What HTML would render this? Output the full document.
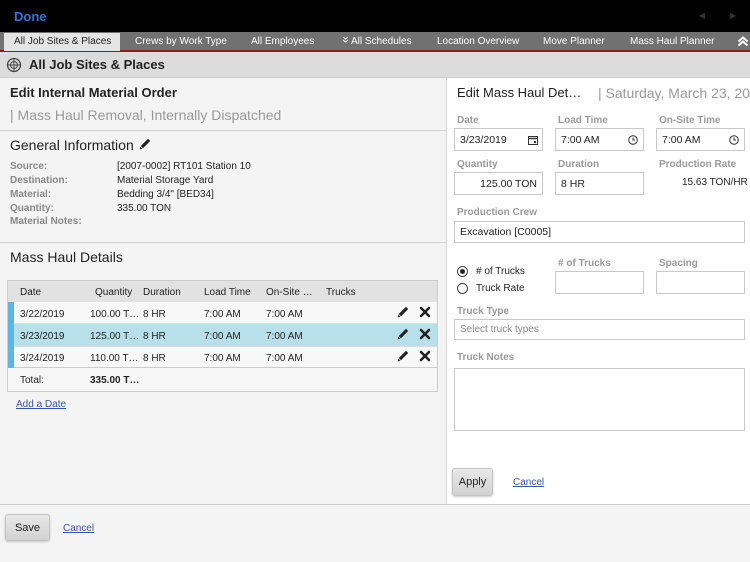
<!DOCTYPE html>
<html><head><meta charset="utf-8"><style>
*{margin:0;padding:0;box-sizing:border-box}
body{width:750px;height:562px;overflow:hidden;background:#f4f4f4;font-family:"Liberation Sans",Arial,sans-serif;position:relative;color:#222}
.a{position:absolute;white-space:nowrap}
.tab{position:absolute;top:36px;font-size:10px;color:#fff}
.lbl{position:absolute;font-size:10px;color:#888;font-weight:bold}
.val{position:absolute;font-size:10px;color:#222}
.in{position:absolute;background:#fff;border:1px solid #c8c8c8;font-size:10.5px;color:#222;padding:0 5px;display:flex;align-items:center}
.rl{position:absolute;font-size:10px;color:#999;font-weight:bold}
.cell{position:absolute;font-size:10px;color:#222}
.btn{position:absolute;background:linear-gradient(#e8e8e8,#d2d2d2);border:1px solid #c4c4c4;border-radius:3px;font-size:11px;display:flex;align-items:center;justify-content:center;box-shadow:0 1px 2px rgba(0,0,0,.2)}
.lnk{position:absolute;font-size:10px;color:#3a54a8;text-decoration:underline}
.pen{position:absolute}
</style></head><body>
<svg width="0" height="0" style="position:absolute"><defs><symbol id="p" viewBox="0 0 12 12"><path d="M9 0.8L11.2 3 4 10.2 1.8 8Z" fill="#222"/><path d="M1.4 8.6L3.4 10.6 0.6 11.4Z" fill="#222"/></symbol><symbol id="x" viewBox="0 0 12 12"><path d="M2 2L10 10M10 2L2 10" stroke="#222" stroke-width="2.6" stroke-linecap="round"/></symbol></defs></svg>
<div class="a" style="left:0;top:0;width:750px;height:32px;background:#000"></div>
<div class="a" style="left:14px;top:9px;font-size:13px;font-weight:bold;color:#2a78d6">Done</div>
<div class="a" style="left:699px;top:11px;font-size:8px;color:#333">◀</div>
<div class="a" style="left:730px;top:11px;font-size:8px;color:#333">▶</div>
<div class="a" style="left:0;top:32px;width:750px;height:19px;background:#717171"></div>
<div class="a" style="left:0;top:50px;width:750px;height:2px;background:#8c1c1c"></div>
<div class="a" style="left:4px;top:33px;width:116px;height:18px;background:#e4e4e4"></div>
<div class="tab" style="left:14px;color:#222">All Job Sites &amp; Places</div>
<div class="tab" style="left:135px">Crews by Work Type</div>
<div class="tab" style="left:251px">All Employees</div>
<svg class="a" style="left:342px;top:36px" width="7" height="7" viewBox="0 0 7 7"><path d="M1 1l2.5 2 2.5-2M1 4l2.5 2 2.5-2" stroke="#fff" fill="none"/></svg>
<div class="tab" style="left:351px">All Schedules</div>
<div class="tab" style="left:437px">Location Overview</div>
<div class="tab" style="left:543px">Move Planner</div>
<div class="tab" style="left:630px">Mass Haul Planner</div>
<svg class="a" style="left:737px;top:36px" width="12" height="11" viewBox="0 0 12 11"><path d="M1.5 5.5L6 1.5 10.5 5.5M1.5 9.5L6 5.5 10.5 9.5" stroke="#fff" stroke-width="2" fill="none"/></svg>
<div class="a" style="left:0;top:52px;width:750px;height:26px;background:#dcdcdc;border-bottom:1px solid #ccc"></div>
<svg class="a" style="left:6px;top:57px" width="16" height="16" viewBox="0 0 16 16"><circle cx="8" cy="8" r="6.5" fill="none" stroke="#444" stroke-width="1.3"/><circle cx="8" cy="8" r="3.5" fill="none" stroke="#444"/><path d="M1.5 8h13M8 1.5v13" stroke="#444"/></svg>
<div class="a" style="left:29px;top:57px;font-size:13px;font-weight:bold">All Job Sites &amp; Places</div>

<div class="a" style="left:446px;top:78px;width:304px;height:426px;background:#fff;border-left:1px solid #d4d4d4"></div>
<div class="a" style="left:0;top:504px;width:750px;height:1px;background:#ccc"></div>

<div class="a" style="left:10px;top:85px;font-size:13px;font-weight:bold">Edit Internal Material Order</div>
<div class="a" style="left:10px;top:107px;font-size:14px;color:#999">| Mass Haul Removal, Internally Dispatched</div>
<div class="a" style="left:0;top:130px;width:446px;height:1px;background:#d0d0d0"></div>
<div class="a" style="left:10px;top:137px;font-size:14px">General Information</div>
<svg class="pen" style="left:139px;top:138px" width="12" height="12"><use href="#p"/></svg>
<div class="lbl" style="left:10px;top:161px">Source:</div><div class="val" style="left:117px;top:161px">[2007-0002] RT101 Station 10</div>
<div class="lbl" style="left:10px;top:175px">Destination:</div><div class="val" style="left:117px;top:175px">Material Storage Yard</div>
<div class="lbl" style="left:10px;top:189px">Material:</div><div class="val" style="left:117px;top:189px">Bedding 3/4" [BED34]</div>
<div class="lbl" style="left:10px;top:203px">Quantity:</div><div class="val" style="left:117px;top:203px">335.00 TON</div>
<div class="lbl" style="left:10px;top:216px">Material Notes:</div>
<div class="a" style="left:0;top:242px;width:446px;height:1px;background:#d0d0d0"></div>
<div class="a" style="left:10px;top:249px;font-size:14px">Mass Haul Details</div>

<div class="a" style="left:7px;top:280px;width:431px;height:112px;border:1px solid #ccc;background:#f6f6f6"></div>
<div class="a" style="left:8px;top:281px;width:429px;height:21px;background:#e2e2e2"></div>
<div class="a" style="left:8px;top:302px;width:429px;height:22px;background:#f8f8f8;border-bottom:1px solid #ddd"></div>
<div class="a" style="left:8px;top:324px;width:429px;height:22px;background:#b8e0ea"></div>
<div class="a" style="left:8px;top:346px;width:429px;height:22px;background:#f8f8f8;border-top:1px solid #ddd;border-bottom:1px solid #ccc"></div>
<div class="a" style="left:8px;top:302px;width:6px;height:66px;background:#5ab7e4"></div>
<div class="cell" style="left:20px;top:287px">Date</div><div class="cell" style="left:95px;top:287px">Quantity</div><div class="cell" style="left:143px;top:287px">Duration</div><div class="cell" style="left:204px;top:287px">Load Time</div><div class="cell" style="left:266px;top:287px">On-Site …</div><div class="cell" style="left:326px;top:287px">Trucks</div>
<div class="cell" style="left:20px;top:309px">3/22/2019</div><div class="cell" style="left:90px;top:309px">100.00 T…</div><div class="cell" style="left:143px;top:309px">8 HR</div><div class="cell" style="left:204px;top:309px">7:00 AM</div><div class="cell" style="left:266px;top:309px">7:00 AM</div>
<div class="cell" style="left:20px;top:331px">3/23/2019</div><div class="cell" style="left:90px;top:331px">125.00 T…</div><div class="cell" style="left:143px;top:331px">8 HR</div><div class="cell" style="left:204px;top:331px">7:00 AM</div><div class="cell" style="left:266px;top:331px">7:00 AM</div>
<div class="cell" style="left:20px;top:353px">3/24/2019</div><div class="cell" style="left:90px;top:353px">110.00 T…</div><div class="cell" style="left:143px;top:353px">8 HR</div><div class="cell" style="left:204px;top:353px">7:00 AM</div><div class="cell" style="left:266px;top:353px">7:00 AM</div>
<div class="cell" style="left:20px;top:375px">Total:</div><div class="cell" style="left:90px;top:375px;font-weight:bold">335.00 T…</div>
<svg class="pen" style="left:397px;top:306px" width="12" height="12"><use href="#p"/></svg><svg class="pen" style="left:419px;top:306px" width="12" height="12"><use href="#x"/></svg>
<svg class="pen" style="left:397px;top:328px" width="12" height="12"><use href="#p"/></svg><svg class="pen" style="left:419px;top:328px" width="12" height="12"><use href="#x"/></svg>
<svg class="pen" style="left:397px;top:350px" width="12" height="12"><use href="#p"/></svg><svg class="pen" style="left:419px;top:350px" width="12" height="12"><use href="#x"/></svg>
<div class="lnk" style="left:16px;top:399px">Add a Date</div>

<div class="a" style="left:457px;top:85px;font-size:13px">Edit Mass Haul Det…</div>
<div class="a" style="left:598px;top:85px;font-size:14px;color:#999">| Saturday, March 23, 20…</div>
<div class="rl" style="left:457px;top:115px">Date</div><div class="rl" style="left:558px;top:115px">Load Time</div><div class="rl" style="left:659px;top:115px">On-Site Time</div>
<div class="in" style="left:454px;top:128px;width:89px;height:23px">3/23/2019<svg style="position:absolute;right:4px;top:6px" width="10" height="10" viewBox="0 0 10 10"><rect x="0.5" y="1.5" width="9" height="8" fill="none" stroke="#333"/><path d="M0.5 3.5h9" stroke="#333" stroke-width="1.5"/><rect x="6" y="6" width="2" height="2" fill="#333"/></svg></div>
<div class="in" style="left:555px;top:128px;width:89px;height:23px">7:00 AM<svg style="position:absolute;right:5px;top:6px" width="10" height="10" viewBox="0 0 10 10"><circle cx="5" cy="5" r="4.3" fill="none" stroke="#333"/><path d="M5 2.5V5h2" stroke="#333" fill="none"/></svg></div>
<div class="in" style="left:656px;top:128px;width:89px;height:23px">7:00 AM<svg style="position:absolute;right:5px;top:6px" width="10" height="10" viewBox="0 0 10 10"><circle cx="5" cy="5" r="4.3" fill="none" stroke="#333"/><path d="M5 2.5V5h2" stroke="#333" fill="none"/></svg></div>
<div class="rl" style="left:457px;top:159px">Quantity</div><div class="rl" style="left:558px;top:159px">Duration</div><div class="rl" style="left:659px;top:159px">Production Rate</div>
<div class="in" style="left:454px;top:172px;width:89px;height:23px;justify-content:flex-end">125.00 TON</div>
<div class="in" style="left:555px;top:172px;width:89px;height:23px">8 HR</div>
<div class="a" style="left:682px;top:177px;font-size:10px">15.63 TON/HR</div>
<div class="rl" style="left:457px;top:207px">Production Crew</div>
<div class="in" style="left:454px;top:221px;width:291px;height:22px">Excavation [C0005]</div>
<div class="a" style="left:457px;top:266px;width:11px;height:11px;border:1px solid #444;border-radius:50%"><div style="margin:2px;width:5px;height:5px;border-radius:50%;background:#222"></div></div>
<div class="a" style="left:476px;top:266px;font-size:10px"># of Trucks</div>
<div class="a" style="left:457px;top:283px;width:11px;height:11px;border:1px solid #444;border-radius:50%"></div>
<div class="a" style="left:476px;top:283px;font-size:10px">Truck Rate</div>
<div class="rl" style="left:558px;top:258px"># of Trucks</div><div class="rl" style="left:659px;top:258px">Spacing</div>
<div class="in" style="left:555px;top:271px;width:89px;height:23px"></div>
<div class="in" style="left:656px;top:271px;width:89px;height:23px"></div>
<div class="rl" style="left:457px;top:306px">Truck Type</div>
<div class="in" style="left:454px;top:319px;width:291px;height:21px;color:#888;font-size:10px">Select truck types</div>
<div class="rl" style="left:457px;top:352px">Truck Notes</div>
<div class="in" style="left:454px;top:368px;width:291px;height:63px"></div>
<div class="btn" style="left:452px;top:468px;width:41px;height:28px">Apply</div>
<div class="lnk" style="left:513px;top:477px">Cancel</div>
<div class="btn" style="left:5px;top:514px;width:45px;height:27px">Save</div>
<div class="lnk" style="left:63px;top:523px">Cancel</div>
</body></html>
